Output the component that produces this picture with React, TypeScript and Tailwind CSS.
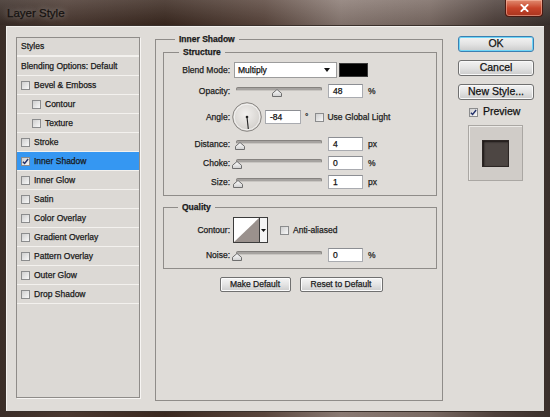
import React from 'react';

const sans = "font-['Liberation_Sans',Arial,sans-serif]";

function Check({ on, className = '' }: { on?: boolean; className?: string }) {
  return (
    <span
      className={`inline-flex h-[9px] w-[9px] shrink-0 items-center justify-center border border-[#8b8c8d] bg-gradient-to-br from-[#cfcfcf] to-[#f8f8f8] ${className}`}
    >
      {on && (
        <svg viewBox="0 0 8 8" className="h-[7px] w-[7px]">
          <path d="M1 4.2 L3 6.3 L7 1.2" fill="none" stroke="#22306a" strokeWidth="1.6" />
        </svg>
      )}
    </span>
  );
}

function Slider({ thumb }: { thumb: string }) {
  return (
    <div className="relative h-[14px] w-[90px] shrink-0">
      <div className="absolute left-[2px] right-[2px] top-[3px] h-[4px] rounded-full border border-[#85827f] border-b-[#c9c6c2] bg-[#a6a3a0]" />
      <svg viewBox="0 0 10 8" className={`absolute top-[5px] h-[8px] w-[10px] ${thumb}`}>
        <defs>
          <linearGradient id="th" x1="0" y1="0" x2="0" y2="1">
            <stop offset="0" stopColor="#ffffff" />
            <stop offset="1" stopColor="#cfcfcf" />
          </linearGradient>
        </defs>
        <path d="M5 0.5 L9.5 4.3 L9.5 7.5 L0.5 7.5 L0.5 4.3 Z" fill="url(#th)" stroke="#6e6e6e" strokeWidth="1" />
      </svg>
    </div>
  );
}

function Num({ value, w = 'w-[35px]' }: { value: string; w?: string }) {
  return (
    <div className={`flex h-[14px] ${w} shrink-0 items-center border border-[#a9abb0] border-t-[#8c8e93] bg-white pl-[4px] text-[8.5px] text-[#111]`}>
      {value}
    </div>
  );
}

function Label({ children }: { children: React.ReactNode }) {
  return <div className="w-[66px] shrink-0 text-right text-[8.5px] text-[#1c1c1c]">{children}</div>;
}

function SliderRow({ label, thumb, value, unit, className = '' }: { label: string; thumb: string; value: string; unit: string; className?: string }) {
  return (
    <div className={`flex h-[14px] items-center ${className}`}>
      <Label>{label}</Label>
      <div className="ml-[4px] flex items-center">
        <Slider thumb={thumb} />
        <div className="ml-[4px]">
          <Num value={value} />
        </div>
        <span className="ml-[5px] text-[8.5px] text-[#1c1c1c]">{unit}</span>
      </div>
    </div>
  );
}

function Btn({ children, className = '' }: { children: React.ReactNode; className?: string }) {
  return (
    <div
      className={`flex h-[15px] items-center justify-center rounded-[2px] border border-[#707070] bg-gradient-to-b from-[#f5f5f5] via-[#e4e4e4] to-[#cdcdcd] text-[8.5px] text-[#1a1a1a] shadow-[inset_0_0_0_1px_#fbfbfb] ${className}`}
    >
      {children}
    </div>
  );
}

function BigBtn({ children, focus }: { children: React.ReactNode; focus?: boolean }) {
  return (
    <div
      className={`flex h-[16px] w-[76px] items-center justify-center rounded-[3px] border bg-gradient-to-b from-[#f3f3f3] via-[#e3e3e3] to-[#cbcbcb] text-[10.5px] text-[#111] ${
        focus ? 'border-[#3c7fb1] shadow-[inset_0_0_0_1px_#6fd6f7]' : 'border-[#707070] shadow-[inset_0_0_0_1px_#f9f9f9]'
      }`}
    >
      {children}
    </div>
  );
}

const items: { name: string; sub?: boolean; on?: boolean }[] = [
  { name: 'Bevel & Emboss' },
  { name: 'Contour', sub: true },
  { name: 'Texture', sub: true },
  { name: 'Stroke' },
  { name: 'Inner Shadow', on: true },
  { name: 'Inner Glow' },
  { name: 'Satin' },
  { name: 'Color Overlay' },
  { name: 'Gradient Overlay' },
  { name: 'Pattern Overlay' },
  { name: 'Outer Glow' },
  { name: 'Drop Shadow' },
];

function StylesList() {
  return (
    <div className="ml-[10px] mt-[11px] h-[361px] w-[124px] shrink-0 border border-[#8f8c89] bg-[#dcd9d5] shadow-[1px_1px_0_#f7f5f3]">
      <div className="flex h-[19px] items-center border-b-2 border-[#f3f1ee] pl-[4px] text-[8.5px] text-[#1a1a1a]">Styles</div>
      <div className="flex h-[19px] items-center border-b border-[#f3f1ee] pl-[4px] text-[8.5px] text-[#1a1a1a]">Blending Options: Default</div>
      {items.map((it) => (
        <div
          key={it.name}
          className={`flex h-[19px] items-center border-b border-[#f3f1ee] text-[8.5px] text-[#1a1a1a] ${
            it.on ? 'bg-[#3597f2]' : ''
          } ${it.sub ? 'pl-[15px]' : 'pl-[4px]'}`}
        >
          <Check on={it.on} />
          <span className="ml-[4px]">{it.name}</span>
        </div>
      ))}
    </div>
  );
}

function Dial() {
  return (
    <svg viewBox="0 0 30 30" className="h-[30px] w-[30px] shrink-0">
      <defs>
        <radialGradient id="dial" cx="0.45" cy="0.4" r="0.6">
          <stop offset="0" stopColor="#f2f0ee" />
          <stop offset="1" stopColor="#d2cfcb" />
        </radialGradient>
      </defs>
      <circle cx="15" cy="15" r="14.3" fill="url(#dial)" stroke="#8a8784" strokeWidth="1" />
      <circle cx="15" cy="15" r="12.8" fill="none" stroke="#ffffff" strokeWidth="0.8" opacity="0.8" />
      <line x1="15" y1="15" x2="16.3" y2="27" stroke="#222" strokeWidth="1.1" />
      <circle cx="15" cy="15" r="1.3" fill="#222" />
    </svg>
  );
}

function Legend({ children, ml }: { children: React.ReactNode; ml: string }) {
  return <legend className={`${ml} px-[4px] text-[8.5px] font-bold leading-[10px] text-[#1a1a1a]`}>{children}</legend>;
}

function InnerShadow() {
  return (
    <fieldset className="ml-[15px] mt-[8px] h-[367px] w-[288px] shrink-0 border border-[#8f8c89] pl-[7px] pr-[5px]">
      <Legend ml="ml-[12px]">Inner Shadow</Legend>
      <fieldset className="mt-[3px] border border-[#8f8c89] px-0 pb-[6px] pt-[5px]">
        <Legend ml="ml-[15px]">Structure</Legend>
        <div className="flex h-[16px] items-center">
          <Label>Blend Mode:</Label>
          <div className="ml-[4px] flex h-[16px] w-[103px] items-center justify-between border border-[#9c9c9c] bg-white pl-[3px] pr-[6px] text-[8.5px] text-[#111]">
            <span>Multiply</span>
            <svg viewBox="0 0 6 4" className="h-[4px] w-[6px]">
              <path d="M0 0 L6 0 L3 4 Z" fill="#111" />
            </svg>
          </div>
          <div className="ml-[2px] h-[14px] w-[29px] border border-[#3a3a3a] bg-black" />
        </div>
        <SliderRow className="mt-[6px]" label="Opacity:" thumb="left-[38px]" value="48" unit="%" />
        <div className="mt-[4px] flex h-[30px] items-center">
          <Label>Angle:</Label>
          <div className="ml-[2px] flex items-center">
            <Dial />
            <div className="ml-[3px]">
              <Num value="-84" w="w-[36px]" />
            </div>
            <span className="ml-[4px] text-[8.5px] text-[#1c1c1c]">°</span>
            <Check className="ml-[7px]" />
            <span className="ml-[3px] text-[8.5px] text-[#1c1c1c]">Use Global Light</span>
          </div>
        </div>
        <SliderRow className="mt-[5px]" label="Distance:" thumb="left-[1px]" value="4" unit="px" />
        <SliderRow className="mt-[5px]" label="Choke:" thumb="left-[-2px]" value="0" unit="%" />
        <SliderRow className="mt-[5px]" label="Size:" thumb="left-[-1px]" value="1" unit="px" />
      </fieldset>
      <fieldset className="mt-[6px] border border-[#8f8c89] px-0 pb-[6px] pt-[5px]">
        <Legend ml="ml-[14px]">Quality</Legend>
        <div className="flex h-[26px] items-center">
          <Label>Contour:</Label>
          <div className="ml-[3px] flex h-[26px] w-[35px] border border-[#3c3c3c] bg-white">
            <svg viewBox="0 0 25 24" preserveAspectRatio="none" className="h-full w-[25px]">
              <path d="M0 24 L25 0 L25 24 Z" fill="#9a918d" />
            </svg>
            <div className="flex flex-1 items-center justify-center border-l border-[#3c3c3c] bg-[#f4f4f4]">
              <svg viewBox="0 0 5 3" className="h-[3px] w-[5px]">
                <path d="M0 0 L5 0 L2.5 3 Z" fill="#111" />
              </svg>
            </div>
          </div>
          <Check className="ml-[12px]" />
          <span className="ml-[4px] text-[8.5px] text-[#1c1c1c]">Anti-aliased</span>
        </div>
        <SliderRow className="mt-[5px]" label="Noise:" thumb="left-[-2px]" value="0" unit="%" />
      </fieldset>
      <div className="mt-[8px] flex justify-center gap-[9px] pl-[2px]">
        <Btn className="w-[71px]">Make Default</Btn>
        <Btn className="w-[83px]">Reset to Default</Btn>
      </div>
    </fieldset>
  );
}

function Side() {
  return (
    <div className="ml-[15px] mt-[10px] flex w-[76px] shrink-0 flex-col">
      <BigBtn focus>OK</BigBtn>
      <div className="mt-[8px]">
        <BigBtn>Cancel</BigBtn>
      </div>
      <div className="mt-[8px]">
        <BigBtn>New Style...</BigBtn>
      </div>
      <div className="ml-[11px] mt-[6px] flex h-[12px] items-center">
        <Check on />
        <span className="ml-[5px] text-[10.5px] text-[#111]">Preview</span>
      </div>
      <div className="ml-[10px] mt-[7px] flex h-[56px] w-[55px] items-start border border-[#aaa7a3] bg-[#d0ccc8] pl-[13px] pt-[14px] shadow-[inset_1px_1px_0_#eceae7]">
        <div className="h-[27px] w-[27px] border border-[#2c2624] bg-[#4d4643] shadow-[inset_1px_1px_2px_#1a1513]" />
      </div>
    </div>
  );
}

export default function App() {
  return (
    <div
      className={`${sans} flex h-[417px] w-[550px] flex-col overflow-hidden bg-[linear-gradient(90deg,#3a2d27_0%,#4a3830_12%,#3a281f_30%,#5a463d_48%,#8a7a73_62%,#7a6a63_78%,#4e403b_90%,#3a302c_100%)] [-webkit-text-stroke:0.25px_currentColor]`}
    >
      <div className="flex h-[25px] shrink-0 items-start justify-between bg-[linear-gradient(180deg,rgba(255,255,255,0.14),rgba(0,0,0,0.08))]">
        <span className="ml-[7px] mt-[5px] text-[11.5px] text-[#151210] [text-shadow:0_0_6px_rgba(255,255,255,0.55)]">Layer Style</span>
        <div className="mr-[7px] flex h-[17px] w-[38px] items-center justify-center rounded-b-[4px] border border-t-0 border-[#4a1a12] bg-gradient-to-b from-[#e08a70] via-[#c8442a] to-[#a8341e] shadow-[inset_0_0_0_1px_rgba(255,200,180,0.5)]">
          <svg viewBox="0 0 10 9" className="h-[8px] w-[9px]">
            <path d="M1.5 1 L8.5 8 M8.5 1 L1.5 8" stroke="#ffffff" strokeWidth="2.2" strokeLinecap="round" />
          </svg>
        </div>
      </div>
      <div className="mx-[5px] mb-[5px] flex flex-1 items-start border border-[#3a302b] bg-[#dfdcd8] shadow-[inset_1px_1px_0_#f3f1ee]">
        <StylesList />
        <InnerShadow />
        <Side />
      </div>
    </div>
  );
}
